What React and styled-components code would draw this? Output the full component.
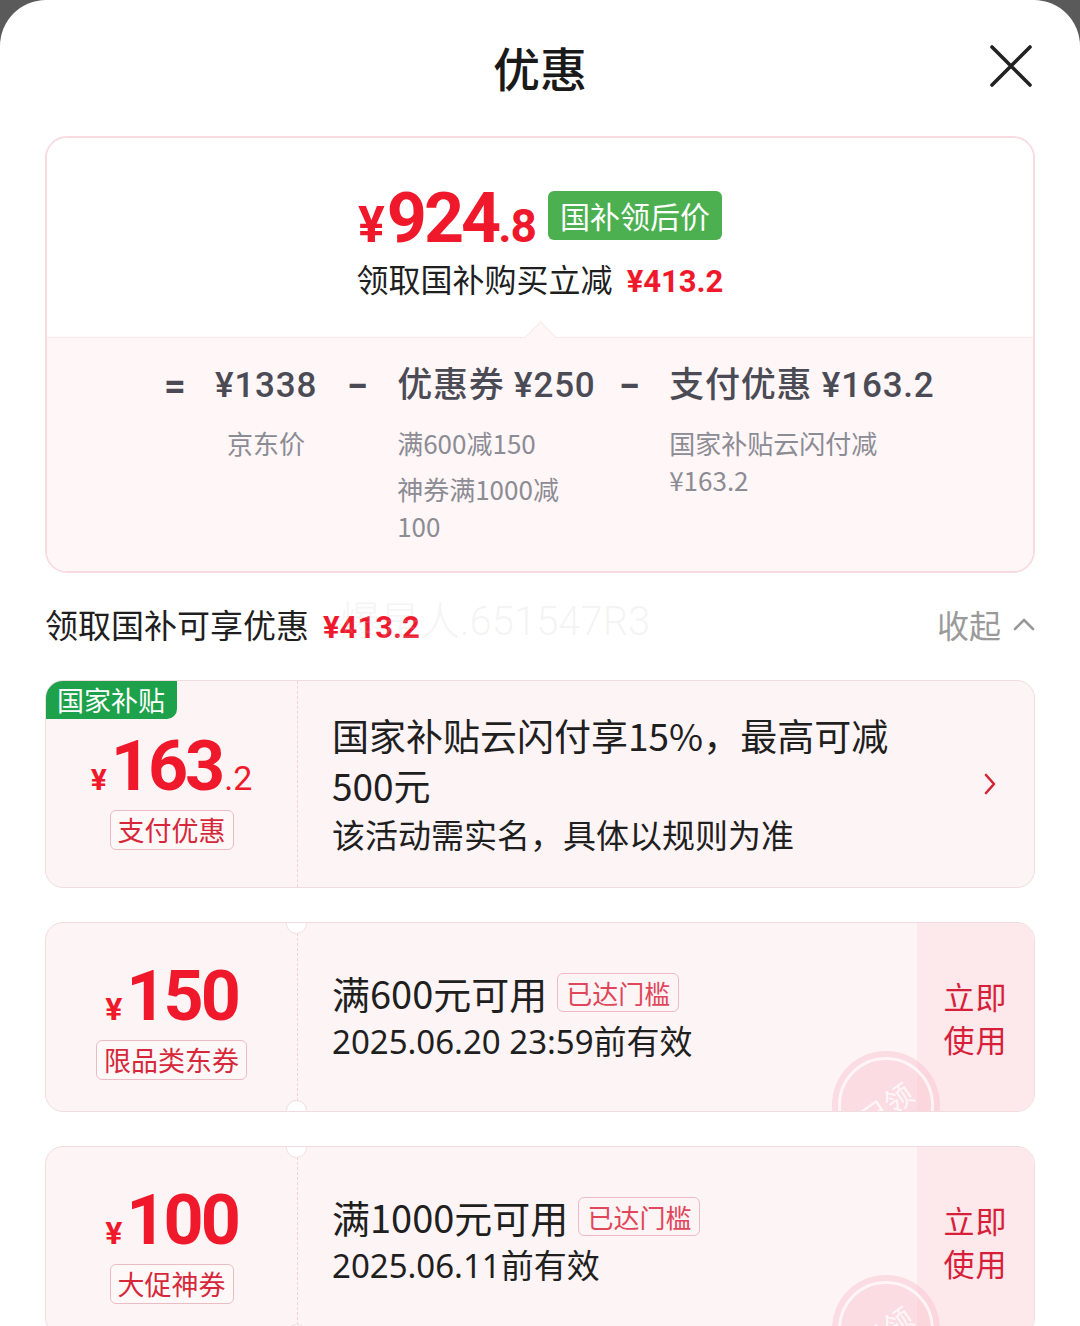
import React from 'react'
import styled, { createGlobalStyle } from 'styled-components'

const RED = '#f0192c'
const CJK = `"Noto Sans CJK SC", "Noto Sans", sans-serif`
const NUM = `Roboto, "Noto Sans CJK SC", sans-serif`

const Global = createGlobalStyle`
  html, body {
    margin: 0;
    padding: 0;
    height: 1326px;
    overflow: hidden;
    background: #5a5a5a;
  }
  * { box-sizing: border-box; }
`

function CloseIcon() {
  return (
    <svg width="46" height="46" viewBox="0 0 46 46">
      <path d="M4 4 L42 42 M42 4 L4 42" stroke="#222" strokeWidth="3.6" strokeLinecap="round" />
    </svg>
  )
}

function ChevronUp() {
  return (
    <svg width="22" height="14" viewBox="0 0 22 14">
      <path d="M2 12 L11 3 L20 12" stroke="#999" strokeWidth="2.6" fill="none" strokeLinecap="round" strokeLinejoin="round" />
    </svg>
  )
}

function ChevronRight() {
  return (
    <svg width="14" height="24" viewBox="0 0 14 24">
      <path d="M3 3 L11 12 L3 21" stroke="#d42436" strokeWidth="2.6" fill="none" strokeLinecap="round" strokeLinejoin="round" />
    </svg>
  )
}

function Coupon({ amount, label, title, date }) {
  return (
    <Ticket>
      <Left $notched>
        <Price>
          <Yen $size={32}>¥</Yen>
          <Digits>{amount}</Digits>
        </Price>
        <Tag>{label}</Tag>
      </Left>
      <Body>
        <Line>
          <Headline>{title}</Headline>
          <Threshold>已达门槛</Threshold>
        </Line>
        <DateText>{date}</DateText>
      </Body>
      <Action>
        立即
        <br />
        使用
      </Action>
      <Stamp>
        <span>已领</span>
      </Stamp>
    </Ticket>
  )
}

export default function App() {
  return (
    <>
      <Global />
      <Sheet>
        <Header>
          <span />
          <Title>优惠</Title>
          <CloseBtn>
            <CloseIcon />
          </CloseBtn>
        </Header>

        <Summary>
          <SummaryTop>
            <PriceRow>
              <BigPrice>
                <span className="yen">¥</span>
                <span className="int">924</span>
                <span className="dec">.8</span>
              </BigPrice>
              <GreenBadge>国补领后价</GreenBadge>
            </PriceRow>
            <Saving>
              领取国补购买立减<RedNum $size={31}>¥413.2</RedNum>
            </Saving>
          </SummaryTop>
          <SummaryBottom>
            <Op>=</Op>
            <Col $center>
              <Value>¥1338</Value>
              <Sub>京东价</Sub>
            </Col>
            <Op>−</Op>
            <Col $w={192}>
              <Value>优惠券 ¥250</Value>
              <Sub>满600减150</Sub>
              <Sub>神券满1000减100</Sub>
            </Col>
            <Op>−</Op>
            <Col $w={252}>
              <Value>支付优惠 ¥163.2</Value>
              <Sub>国家补贴云闪付减¥163.2</Sub>
            </Col>
          </SummaryBottom>
        </Summary>

        <SectionRow>
          <SectionTitle>
            领取国补可享优惠<RedNum $size={31}>¥413.2</RedNum>
          </SectionTitle>
          <Watermark>爆是人.651547R3</Watermark>
          <Collapse>
            收起
            <ChevronUp />
          </Collapse>
        </SectionRow>

        <PayCard>
          <GovTag>国家补贴</GovTag>
          <Left $pad={16}>
            <Price>
              <Yen $size={30}>¥</Yen>
              <Digits>163</Digits>
              <Decimal>.2</Decimal>
            </Price>
            <Tag>支付优惠</Tag>
          </Left>
          <Body>
            <PayTitle>国家补贴云闪付享15%，最高可减500元</PayTitle>
            <PayNote>该活动需实名，具体以规则为准</PayNote>
          </Body>
          <Arrow>
            <ChevronRight />
          </Arrow>
        </PayCard>

        <Coupon amount="150" label="限品类东券" title="满600元可用" date="2025.06.20 23:59前有效" />
        <Coupon amount="100" label="大促神券" title="满1000元可用" date="2025.06.11前有效" />
      </Sheet>
    </>
  )
}

const Sheet = styled.div`
  min-height: 1326px;
  background: #fff;
  border-radius: 46px 46px 0 0;
  padding: 0 45px;
  font-family: ${CJK};
  color: #222;
`

const Header = styled.div`
  display: grid;
  grid-template-columns: 1fr auto 1fr;
  align-items: center;
  height: 136px;
  padding-bottom: 4px;
`

const Title = styled.h1`
  margin: 0;
  font-size: 47px;
  font-weight: 500;
  color: #1a1a1a;
`

const CloseBtn = styled.div`
  justify-self: end;
  display: flex;
  margin-right: 1px;
`

const Summary = styled.div`
  border: 2px solid #f8dbe1;
  border-radius: 22px;
  overflow: hidden;
`

const SummaryTop = styled.div`
  height: 199px;
  display: flex;
  flex-direction: column;
  align-items: center;
  padding-top: 49px;
  background: #fff;
`

const PriceRow = styled.div`
  display: flex;
  align-items: center;
  gap: 12px;
  height: 56px;
`

const BigPrice = styled.div`
  display: flex;
  align-items: baseline;
  color: ${RED};
  font-family: ${NUM};
  font-weight: 700;
  line-height: 1;
  margin-top: 6px;

  .yen {
    font-size: 50px;
    margin-right: 2px;
  }
  .int {
    font-size: 70px;
    letter-spacing: -3px;
  }
  .dec {
    font-size: 46px;
    letter-spacing: -1px;
  }
`

const GreenBadge = styled.div`
  background: #4caf50;
  color: #fff;
  font-size: 30px;
  height: 49px;
  line-height: 49px;
  padding: 0 12px;
  border-radius: 6px;
`

const Saving = styled.div`
  margin-top: 14px;
  font-size: 32px;
  line-height: 42px;
  color: #1f1f1f;
  display: flex;
  align-items: baseline;
`

const RedNum = styled.span`
  color: ${RED};
  font-family: ${NUM};
  font-weight: 700;
  font-size: ${(p) => p.$size || 30}px;
  margin-left: 14px;
`

const SummaryBottom = styled.div`
  position: relative;
  display: flex;
  align-items: flex-start;
  gap: 28px;
  padding: 24px 0 27px 116px;
  background: #fff6f7;
  border-top: 1px solid #fbe8eb;

  &::before {
    content: '';
    position: absolute;
    top: -12px;
    left: 50%;
    width: 22px;
    height: 22px;
    margin-left: -11px;
    background: #fff6f7;
    border-top: 1px solid #fbe8eb;
    border-left: 1px solid #fbe8eb;
    transform: rotate(45deg);
  }
`

const Op = styled.div`
  width: 24px;
  text-align: center;
  font-family: ${NUM};
  font-size: 38px;
  font-weight: 700;
  line-height: 48px;
  color: #4b4b55;
`

const Col = styled.div`
  display: flex;
  flex-direction: column;
  align-items: ${(p) => (p.$center ? 'center' : 'flex-start')};
  width: ${(p) => (p.$w ? `${p.$w}px` : 'auto')};
`

const Value = styled.div`
  font-family: ${NUM};
  font-size: 35px;
  font-weight: 500;
  letter-spacing: 0.8px;
  line-height: 48px;
  color: #4b4b55;
  white-space: nowrap;
  margin-bottom: 14px;
`

const Sub = styled.div`
  font-size: 26px;
  line-height: 37px;
  color: #8c8c94;
  margin-bottom: 9px;
  &:last-child { margin-bottom: 0; }
`

const SectionRow = styled.div`
  position: relative;
  display: flex;
  align-items: center;
  justify-content: space-between;
  margin-top: 28px;
  height: 46px;
`

const SectionTitle = styled.div`
  font-size: 33px;
  display: flex;
  align-items: baseline;
  color: #1f1f1f;
`

const Watermark = styled.div`
  position: absolute;
  left: 295px;
  top: -12px;
  font-family: ${NUM};
  font-size: 40px;
  font-weight: 300;
  color: rgba(200, 200, 200, 0.2);
  pointer-events: none;
`

const Collapse = styled.div`
  display: flex;
  align-items: center;
  gap: 12px;
  font-size: 32px;
  color: #9a9a9a;
`

const CardBase = styled.div`
  position: relative;
  display: grid;
  border: 1px solid #f1dde0;
  border-radius: 18px;
  background: #fdf4f5;
  overflow: hidden;
`

const PayCard = styled(CardBase)`
  grid-template-columns: 252px 1fr 76px;
  height: 208px;
  margin-top: 33px;
`

const Ticket = styled(CardBase)`
  grid-template-columns: 252px 1fr 117px;
  height: 190px;
  margin-top: 34px;
`

const GovTag = styled.div`
  position: absolute;
  top: -1px;
  left: -1px;
  height: 39px;
  line-height: 39px;
  padding: 0 12px;
  background: #1da24b;
  color: #fff;
  font-size: 27px;
  border-radius: 16px 0 10px 0;
  z-index: 1;
`

const Left = styled.div`
  position: relative;
  display: flex;
  flex-direction: column;
  align-items: center;
  justify-content: center;
  gap: 10px;
  padding-top: ${(p) => p.$pad || 10}px;
  border-right: 1px dashed #f1d3d8;

  ${(p) =>
    p.$notched &&
    `
    &::before, &::after {
      content: '';
      position: absolute;
      right: -10px;
      width: 19px;
      height: 19px;
      border-radius: 50%;
      background: #fff;
      border: 1px solid #f1dde0;
    }
    &::before { top: -10px; }
    &::after { bottom: -10px; }
  `}
`

const Price = styled.div`
  display: flex;
  align-items: baseline;
  color: ${RED};
  font-family: ${NUM};
  line-height: 64px;
  height: 66px;
`

const Yen = styled.span`
  font-size: ${(p) => p.$size}px;
  font-weight: 700;
  margin-right: 4px;
`

const Digits = styled.span`
  font-size: 70px;
  font-weight: 700;
  letter-spacing: -3px;
`

const Decimal = styled.span`
  font-size: 34px;
  font-weight: 400;
  margin-left: 2px;
`

const Tag = styled.div`
  font-size: 27px;
  line-height: 38px;
  padding: 0 7px;
  color: #d6283a;
  border: 1px solid #ebbcc3;
  border-radius: 6px;
  background: rgba(255, 255, 255, 0.35);
`

const Body = styled.div`
  display: flex;
  flex-direction: column;
  justify-content: center;
  padding-left: 34px;
`

const PayTitle = styled.div`
  font-size: 37px;
  line-height: 50px;
  color: #1f1f1f;
  max-width: 600px;
`

const PayNote = styled.div`
  font-size: 33px;
  line-height: 48px;
  color: #1f1f1f;
`

const Arrow = styled.div`
  display: flex;
  align-items: center;
  justify-content: flex-start;
  padding-left: 25px;
`

const Line = styled.div`
  display: flex;
  align-items: center;
  gap: 10px;
  height: 50px;
`

const Headline = styled.div`
  font-size: 38px;
  color: #1f1f1f;
`

const Threshold = styled.div`
  font-size: 26px;
  line-height: 37px;
  padding: 0 8px;
  color: #e0475a;
  border: 1px solid #ebbcc3;
  border-radius: 6px;
`

const DateText = styled.div`
  font-family: "Noto Sans", "Noto Sans CJK SC", sans-serif;
  font-size: 33px;
  line-height: 50px;
  color: #1f1f1f;
`

const Action = styled.div`
  display: flex;
  align-items: center;
  justify-content: center;
  text-align: center;
  background: #fde8ec;
  color: #d81f3a;
  font-size: 31px;
  line-height: 43px;
  letter-spacing: 1px;
`

const Stamp = styled.div`
  position: absolute;
  right: 94px;
  top: 128px;
  width: 108px;
  height: 108px;
  border-radius: 50%;
  background: rgba(250, 200, 210, 0.55);
  display: flex;
  align-items: center;
  justify-content: center;

  &::before {
    content: '';
    position: absolute;
    inset: 6px;
    border-radius: 50%;
    border: 3px solid rgba(255, 255, 255, 0.7);
  }

  span {
    font-size: 28px;
    color: rgba(255, 255, 255, 0.8);
    transform: rotate(-35deg);
  }
`
